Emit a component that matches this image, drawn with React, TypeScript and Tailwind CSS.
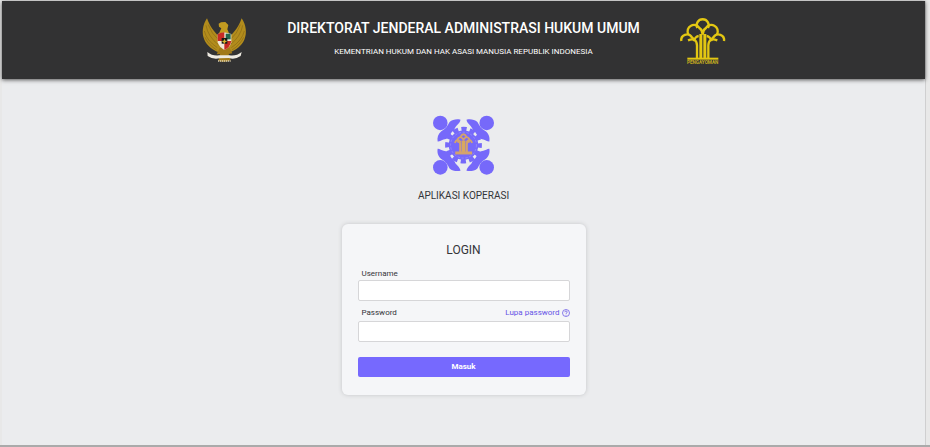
import React from "react";

function Garuda() {
  return (
    <svg viewBox="30 24 144 144" className="size-12 shrink-0" role="img" aria-label="Garuda Pancasila">
      <g fill="#b28c1c">
        <path d="M48 31C35 50 31 76 40 95C48 113 65 126 84 133L94 112L84 86C69 71 57 57 48 31Z" />
        <path d="M152 31C165 50 169 76 160 95C152 113 135 126 116 133L106 112L116 86C131 71 143 57 152 31Z" />
      </g>
      <g fill="none" stroke="#8a6a15" strokeWidth="2">
        <path d="M45 52Q51 86 83 111M40 69Q47 98 79 119M42 88Q53 111 77 126M52 50Q60 76 85 98" />
        <path d="M155 52Q149 86 117 111M160 69Q153 98 121 119M158 88Q147 111 123 126M148 50Q140 76 115 98" />
      </g>
      <path d="M83 47L90 43L103 42L112 51L109 64L116 80H82L91 61L84 56Z" fill="#c39b20" />
      <path d="M86 119L77 139L87 138L82 158Q100 165 119 157L113 138L124 136L114 117Z" fill="#a27918" />
      <path d="M80 78Q100 69 121 78V103Q117 119 100 126Q84 117 80 103Z" fill="#f2e9d9" />
      <path d="M80 78Q90 73 100 73V99H80ZM100 99H121Q117 119 100 126Z" fill="#c72a25" />
      <path d="M104 77H119V94H104Z" fill="#23664e" />
      <path d="M92 90H109V107H92Z" fill="#171916" />
      <path d="M100 92L103 98L109 99L103 103L100 108L97 103L92 99L98 98Z" fill="#d6b42d" />
      <path d="M49 132Q65 145 84 142L116 142Q136 145 152 132L149 144Q131 156 114 150L86 151Q67 156 50 144Z" fill="#eeeae1" />
      <path d="M81 159L119 159" stroke="#e0d5b4" strokeWidth="4" strokeDasharray="4 2" />
    </svg>
  );
}

function Pengayoman() {
  return (
    <svg viewBox="30 24 144 144" className="size-12 shrink-0" role="img" aria-label="Pengayoman">
      <g fill="none" stroke="#e3c712" strokeWidth="7">
        <path d="M85 60A18 18 0 1 1 117 60" />
        <path d="M58 79A19 19 0 0 1 92 61Q101 67 101 80Q101 67 110 61A19 19 0 0 1 144 79" />
        <path d="M37 99A17 17 0 0 1 68 87Q74 92 76 99A15 15 0 0 1 89 84" />
        <path d="M165 99A17 17 0 0 0 134 87Q128 92 126 99A15 15 0 0 0 113 84" />
        <path d="M57 97Q83 87 84 112V151M145 97Q119 87 118 112V151" />
      </g>
      <path d="M91 78H100V150H91ZM103 78H112V150H103Z" fill="#e3c712" />
      <path d="M55 149H148V155H55Z" fill="#e3c712" />
      <text x="101" y="168" textAnchor="middle" fill="#c5ad20" className="font-['Roboto',sans-serif] text-[14px] font-bold">
        PENGAYOMAN
      </text>
    </svg>
  );
}

function Member({ flip }: { flip: string }) {
  return (
    <g transform={`translate(131 120) ${flip}`}>
      <circle cx="-70" cy="-67" r="22" />
      <path d="M-9 -77C-21 -80 -34 -77 -42 -70C-48 -58 -55 -48 -67 -42C-77 -34 -80 -22 -78 -11C-73 -10 -66 -16 -60 -17C-50 -18 -43 -24 -39 -34C-35 -42 -28 -44 -26 -51C-24 -59 -11 -65 -9 -77Z" />
    </g>
  );
}

function CooperativeLogo() {
  return (
    <svg viewBox="39 29 184 184" className="size-[61px]" role="img" aria-label="Logo Aplikasi Koperasi">
      <g fill="#7669fa">
        <Member flip="scale(1 1)" />
        <Member flip="scale(-1 1)" />
        <Member flip="scale(1 -1)" />
        <Member flip="scale(-1 -1)" />
      </g>
      <circle cx="131" cy="120" r="47" fill="#7669fa" stroke="#ebecee" strokeWidth="5" />
      <circle cx="131" cy="120" r="49" fill="none" stroke="#7669fa" strokeWidth="13" strokeDasharray="16 9.66" strokeDashoffset="8" />
      <circle cx="131" cy="120" r="39" fill="none" stroke="#9e94fa" strokeWidth="2" strokeDasharray="7 5" />
      <g fill="none" stroke="#d4a36d" strokeWidth="6">
        <path d="M122 95Q131 79 140 95M112 104Q120 88 131 103Q142 88 150 104M105 113Q112 97 122 111M157 113Q150 97 140 111" />
        <path d="M112 110Q121 108 121 117V142M150 110Q141 108 141 117V142" />
      </g>
      <path d="M125 106H137V142H125Z" fill="#d9a85f" />
      <path d="M106 139H157V148H106Z" fill="#d4a36d" />
    </svg>
  );
}

export default function App() {
  return (
    <div className="flex min-h-screen flex-col border-b-2 border-[#aaa] bg-[#e8e8e8] pt-px pr-1 pl-0.5 font-['Roboto',sans-serif] text-[#343438]">
      <div className="flex grow flex-col border-r border-[#cfcfd0] bg-[#ebecee]">
        <header className="flex h-[78px] items-center justify-center gap-10 bg-[#323233] shadow-[0_1px_4px_#555]">
          <Garuda />
          <div className="flex w-[350px] flex-col items-center gap-2 pb-1 whitespace-nowrap text-white">
            <h1 className="text-[14px] leading-5 font-medium">DIREKTORAT JENDERAL ADMINISTRASI HUKUM UMUM</h1>
            <p className="text-[8px] leading-3">KEMENTRIAN HUKUM DAN HAK ASASI MANUSIA REPUBLIK INDONESIA</p>
          </div>
          <Pengayoman />
        </header>
        <main className="flex flex-col items-center pt-9">
          <CooperativeLogo />
          <h2 className="mt-3 text-[10px] leading-4">APLIKASI KOPERASI</h2>
          <form
            className="mt-5 flex w-[244px] flex-col rounded-md bg-[#f5f6f8] px-4 pt-4 pb-[18px] shadow-[0_0_4px_#c4c5c8]"
            onSubmit={(event) => event.preventDefault()}
          >
            <h3 className="text-center text-[12px] leading-5">LOGIN</h3>
            <label htmlFor="username" className="mt-2 px-1 text-[8px] leading-3">
              Username
            </label>
            <input
              id="username"
              type="text"
              className="h-[21px] rounded-xs border border-[#d6d6d8] bg-white px-1 text-[8px] outline-none"
            />
            <div className="mt-1 flex h-4 items-center justify-between pl-1 text-[8px] leading-3">
              <label htmlFor="password">Password</label>
              <a href="#lupa-password" className="flex items-center gap-0.5 text-[#6654e6]">
                Lupa password
                <svg viewBox="0 0 16 16" className="size-2" fill="none" stroke="currentColor" strokeWidth="1.5" aria-hidden="true">
                  <circle cx="8" cy="8" r="7" />
                  <path d="M5.5 6.5Q5.5 4 8 4T10.5 6.3Q10.5 7.5 8 9V10M8 11.5V13" />
                </svg>
              </a>
            </div>
            <input
              id="password"
              type="password"
              className="h-[21px] rounded-xs border border-[#d6d6d8] bg-white px-1 text-[8px] outline-none"
            />
            <button type="submit" className="mt-[15px] h-5 rounded-xs bg-[#7669fe] text-[8px] leading-3 font-bold text-white">
              Masuk
            </button>
          </form>
        </main>
      </div>
    </div>
  );
}
